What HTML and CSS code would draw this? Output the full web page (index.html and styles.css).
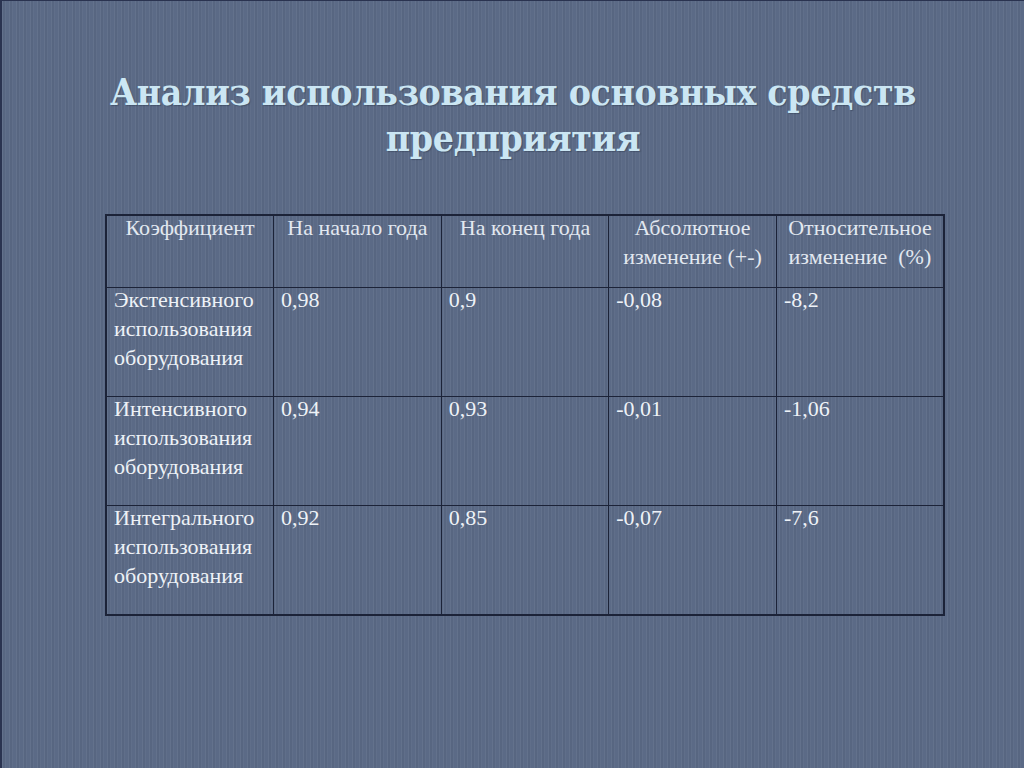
FILE: index.html
```html
<!DOCTYPE html>
<html lang="ru">
<head>
<meta charset="utf-8">
<link rel="stylesheet" href="styles.css">
</head>
<body>
<div class="slide">
  <h1 class="title">Анализ использования основных средств<br>предприятия</h1>
  <table class="data">
    <tr class="head">
      <th><div class="c">Коэффициент</div></th>
      <th><div class="c">На начало года</div></th>
      <th><div class="c">На конец года</div></th>
      <th><div class="c">Абсолютное изменение (+-)</div></th>
      <th><div class="c">Относительное изменение&nbsp; (%)</div></th>
    </tr>
    <tr>
      <td><div class="c">Экстенсивного использования оборудования</div></td>
      <td><div class="c">0,98</div></td>
      <td><div class="c">0,9</div></td>
      <td><div class="c">-0,08</div></td>
      <td><div class="c">-8,2</div></td>
    </tr>
    <tr>
      <td><div class="c">Интенсивного использования оборудования</div></td>
      <td><div class="c">0,94</div></td>
      <td><div class="c">0,93</div></td>
      <td><div class="c">-0,01</div></td>
      <td><div class="c">-1,06</div></td>
    </tr>
    <tr>
      <td><div class="c">Интегрального использования оборудования</div></td>
      <td><div class="c">0,92</div></td>
      <td><div class="c">0,85</div></td>
      <td><div class="c">-0,07</div></td>
      <td><div class="c">-7,6</div></td>
    </tr>
  </table>
</div>
</body>
</html>
```
FILE: styles.css
```css
html, body {
  margin: 0;
  padding: 0;
}
body {
  width: 1024px;
  height: 768px;
  overflow: hidden;
}
.slide {
  box-sizing: border-box;
  width: 1024px;
  height: 768px;
  border-left: 2px solid #2a3350;
  border-top: 1px solid #2a3350;
  background-color: #5b6a86;
  background-image:
    repeating-linear-gradient(90deg,
      rgba(255,255,255,0.05) 0px, rgba(255,255,255,0.05) 1px,
      rgba(0,0,0,0.04) 1px, rgba(0,0,0,0.04) 3px,
      rgba(255,255,255,0.03) 3px, rgba(255,255,255,0.03) 4px,
      rgba(0,0,0,0) 4px, rgba(0,0,0,0) 7px);
  display: flex;
  flex-direction: column;
  align-items: center;
  padding-top: 68px;
}
.title {
  margin: 0;
  font-family: "DejaVu Serif Condensed", "DejaVu Serif", serif;
  font-weight: bold;
  font-size: 37px;
  line-height: 46px;
  color: #cbe6f3;
  text-align: center;
  text-shadow: 1px 1px 1px rgba(20,30,50,0.3);
  letter-spacing: -0.3px;
}
.data {
  margin-top: 53px;
  margin-left: 24px;
  border-collapse: collapse;
  font-family: "Liberation Serif", "Times New Roman", serif;
  font-size: 22px;
  line-height: 29px;
  color: #eef2f7;
  table-layout: fixed;
  width: 840px;
  border: 2px solid #1c2338;
}
.data th, .data td {
  border: 1.5px solid #1c2338;
  vertical-align: top;
  padding: 0 0 0 7px;
  text-align: left;
  font-weight: normal;
}
.data .c {
  margin-top: -3px;
}
.data th {
  text-align: center;
  padding: 0 2px;
  height: 71px;
  color: #e2e8f0;
}
.data td {
  height: 109px;
  box-sizing: border-box;
}
```
